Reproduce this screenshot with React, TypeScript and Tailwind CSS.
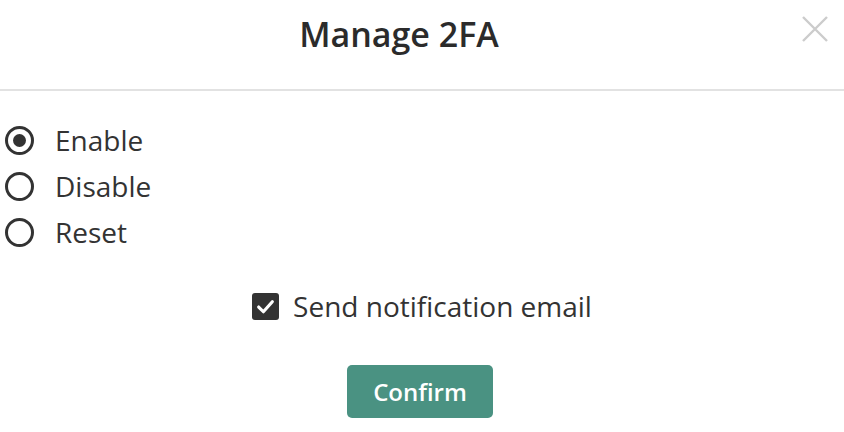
import * as React from "react"

function Radio({ checked }: { checked: boolean }) {
  return (
    <span className="flex h-[29px] w-[29px] shrink-0 items-center justify-center rounded-full border-[3px] border-[#333333]">
      {checked && <span className="h-[13px] w-[13px] rounded-full bg-[#333333]" />}
    </span>
  )
}

export default function App() {
  const [mode, setMode] = React.useState("enable")
  const [notify, setNotify] = React.useState(true)

  const options = [
    { id: "enable", label: "Enable" },
    { id: "disable", label: "Disable" },
    { id: "reset", label: "Reset" },
  ]

  return (
    <div className="h-[432px] w-[844px] overflow-hidden bg-white text-[#333333] font-['Open_Sans',sans-serif]">
      {/* header */}
      <div className="relative flex h-[91px] justify-center border-b-2 border-[#e2e2e2] pr-[46px] pt-[11px]">
        <h1 className="text-[34px] font-semibold leading-[46px] text-[#2b2b2b]">Manage 2FA</h1>
        <button className="absolute right-[15px] top-[15px] text-[#cccccc]" aria-label="Close">
          <svg width="28" height="28" viewBox="0 0 28 28" fill="none" stroke="currentColor" strokeWidth="2.4">
            <path d="M2 2 L26 26 M26 2 L2 26" />
          </svg>
        </button>
      </div>

      {/* options */}
      <div className="flex flex-col pl-[5px] pt-[26px]">
        {options.map((o) => (
          <label
            key={o.id}
            className="flex h-[46px] cursor-pointer items-center gap-[21px] text-[28px] leading-[46px]"
            onClick={() => setMode(o.id)}
          >
            <Radio checked={mode === o.id} />
            <span>{o.label}</span>
          </label>
        ))}
      </div>

      <div className="mt-[28px] flex justify-center">
        <label
          className="flex h-[46px] cursor-pointer items-center gap-[14px] text-[28px] leading-[46px]"
          onClick={() => setNotify(!notify)}
        >
          <span className="flex h-[27px] w-[27px] items-center justify-center rounded-[3px] bg-[#333333]">
            {notify && (
              <svg width="21" height="21" viewBox="0 0 20 20" fill="none" stroke="white" strokeWidth="3" strokeLinecap="round" strokeLinejoin="round">
                <path d="M3.5 10.5 L8 15 L16.5 5.5" />
              </svg>
            )}
          </span>
          <span>Send notification email</span>
        </label>
      </div>

      <div className="mt-[36px] flex justify-center pr-[4px]">
        <button className="h-[53px] w-[146px] rounded-[5px] bg-[#4a9282] text-[24px] font-semibold text-white">
          Confirm
        </button>
      </div>
    </div>
  )
}
